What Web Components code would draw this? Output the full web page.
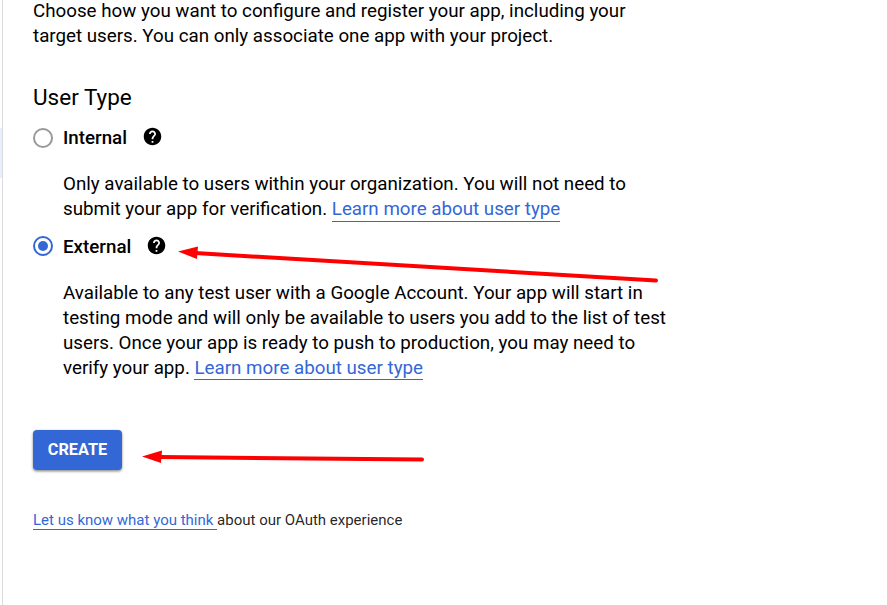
<!DOCTYPE html>
<html lang="en"><head><meta charset="utf-8"><title>User Type</title>
<style>body{margin:0;background:#fff;font-family:Roboto,sans-serif;color:#000}</style></head>
<body><consent-page></consent-page>
<script>
const define=(name,html)=>customElements.define(name,class extends HTMLElement{constructor(){super();this.attachShadow({mode:'open'}).innerHTML=html;}});
define('text-link',`<style>:host{color:#3367d6;border-bottom:1px solid #3367d6;padding-bottom:var(--link-gap,0)}</style><slot></slot>`);
define('help-icon',`<style>:host{display:block;width:21px;height:21px}svg{display:block}</style><svg width="21" height="21" viewBox="0 0 24 24"><path d="M12 2C6.48 2 2 6.48 2 12s4.48 10 10 10 10-4.48 10-10S17.52 2 12 2zm1 17h-2v-2h2v2zm2.07-7.75l-.9.92C13.45 12.9 13 13.5 13 15h-2v-.5c0-1.1.45-2.1 1.17-2.83l1.24-1.26c.37-.36.59-.86.59-1.41 0-1.1-.9-2-2-2s-2 .9-2 2H8c0-2.21 1.79-4 4-4s4 1.79 4 4c0 .88-.36 1.68-.93 2.25z"/></svg>`);
define('type-option',`<style>:host{display:block}.row{display:flex;align-items:center;height:24px;font-weight:500}
.radio{box-sizing:border-box;width:20px;height:20px;border:2px solid #999;border-radius:50%;margin-right:10px;display:grid;place-items:center}
:host([checked]) .radio{border-color:#3367d6}:host([checked]) .radio::after{content:'';width:10px;height:10px;border-radius:50%;background:#3367d6}
.label{margin-top:1px}:host([checked]) .label{margin-top:3px}help-icon{margin-left:14.500px;margin-top:-3px}:host([checked]) help-icon{margin-top:-1px}.desc{padding:22px 0 0 30px;line-height:25px}:host([checked]) .desc{padding-top:23px}</style>
<div class="row"><span class="radio"></span><span class="label"><slot name="label"></slot></span><help-icon></help-icon></div><div class="desc"><slot></slot></div>`);
define('primary-button',`<style>:host{display:flex;align-items:center;justify-content:center;box-sizing:border-box;padding-bottom:2px;width:89px;height:40px;border-radius:4px;background:#3367d6;color:#fff;font-size:16.250px;font-weight:700;box-shadow:0 1px 3px rgba(0,0,0,.4),0 2px 2px rgba(0,0,0,.12)}</style><slot></slot>`);
define('red-arrows',`<style>:host{position:absolute;inset:0;pointer-events:none}svg{display:block}</style><svg width="887" height="605" fill="#f00" stroke="#f00" stroke-width="4" stroke-linecap="round"><path d="M195 253L656 280.500M160 457L422 459.500"/><path stroke="none" d="M178 251.500L198 246.500L197 259ZM142 456.500L162 450.500L161 463Z"/></svg>`);
define('consent-page',`<style>:host{display:block;position:relative;height:605px;overflow:hidden;font-size:18.750px;line-height:25px}
.page{display:flow-root;margin-left:2px;border-left:1px solid #dadce0;height:605px;padding-left:30px;box-sizing:border-box}
p{margin:0}.intro{margin-top:-1px}h2{margin:0;padding-top:33px;font-size:22.500px;line-height:30px;font-weight:400}
.a{margin-top:14px;--link-gap:1px}.b{margin-top:12px}primary-button{margin-top:49px}.foot{font-size:15px;line-height:20px;margin-top:40px;color:rgba(0,0,0,.87)}
.mark{position:absolute;left:0;top:128px;width:2px;height:50px;background:#e8effc}</style>
<div class="page"><p class="intro">Choose how you want to configure and register your app, including your<br>target users. You can only associate one app with your project.</p>
<h2>User Type</h2>
<type-option class="a"><span slot="label">Internal</span>Only available to users within your organization. You will not need to<br>submit your app for verification. <text-link>Learn more about user type</text-link></type-option>
<type-option class="b" checked><span slot="label">External</span>Available to any test user with a Google Account. Your app will start in<br>testing mode and will only be available to users you add to the list of test<br>users. Once your app is ready to push to production, you may need to<br>verify your app. <text-link>Learn more about user type</text-link></type-option>
<primary-button>CREATE</primary-button>
<div class="foot"><text-link>Let us know what you think </text-link>about our OAuth experience</div></div><div class="mark"></div><red-arrows></red-arrows>`);
</script></body></html>
